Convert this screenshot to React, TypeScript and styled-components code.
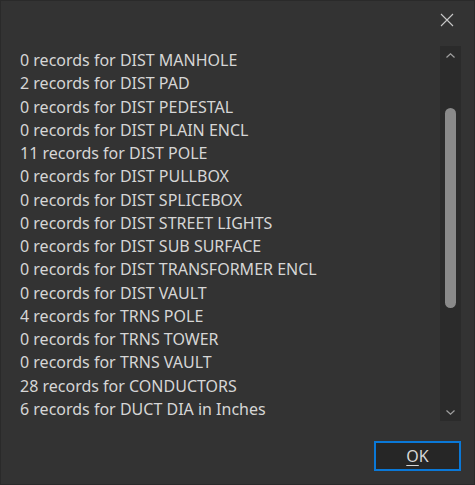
import React from 'react';
import styled, { createGlobalStyle } from 'styled-components';

const GlobalStyle = createGlobalStyle`
  html, body {
    margin: 0;
    padding: 0;
    background: #333333;
  }
`;

const Dialog = styled.div`
  box-sizing: border-box;
  width: 475px;
  height: 485px;
  background: #333333;
  border: 1px solid #2a2a2a;
  display: flex;
  flex-direction: column;
  font-family: 'Noto Sans', 'Open Sans', sans-serif;
  color: #d6d6d6;
`;

const TitleBar = styled.div`
  height: 45px;
  display: flex;
  justify-content: flex-end;
  align-items: flex-start;
  padding-right: 17px;
`;

const CloseButton = styled.div`
  width: 20px;
  height: 20px;
  margin-top: 9px;
  display: flex;
  align-items: center;
  justify-content: center;
`;

const Body = styled.div`
  display: flex;
  height: 375px;
  padding-left: 19px;
  padding-right: 13px;
`;

const List = styled.div`
  flex: 1;
  padding-top: 3px;
  overflow: hidden;
`;

const Row = styled.div`
  font-size: 16px;
  line-height: 23.25px;
  white-space: nowrap;
`;

const ScrollTrack = styled.div`
  width: 21px;
  background: #2b2b2b;
  display: flex;
  flex-direction: column;
  align-items: center;
`;

const Arrow = styled.div`
  height: 18px;
  width: 100%;
  display: flex;
  align-items: center;
  justify-content: center;
`;

const ThumbArea = styled.div`
  flex: 1;
  width: 100%;
  display: flex;
  justify-content: center;
  padding-top: 44px;
`;

const Thumb = styled.div`
  width: 11px;
  height: 200px;
  background: #8a8a8a;
  border-radius: 6px;
`;

const Footer = styled.div`
  flex: 1;
  display: flex;
  justify-content: flex-end;
  align-items: flex-start;
  padding-top: 20px;
  padding-right: 13px;
`;

const OkButton = styled.button`
  box-sizing: border-box;
  width: 87px;
  height: 30px;
  background: #262626;
  border: 2px solid #0a78d7;
  color: #d6d6d6;
  font-family: 'Noto Sans', 'Open Sans', sans-serif;
  font-size: 16px;
  padding: 0;
  u {
    text-decoration-thickness: 1px;
    text-underline-offset: 3px;
  }
`;

const records: [number, string][] = [
  [0, 'DIST MANHOLE'],
  [2, 'DIST PAD'],
  [0, 'DIST PEDESTAL'],
  [0, 'DIST PLAIN ENCL'],
  [11, 'DIST POLE'],
  [0, 'DIST PULLBOX'],
  [0, 'DIST SPLICEBOX'],
  [0, 'DIST STREET LIGHTS'],
  [0, 'DIST SUB SURFACE'],
  [0, 'DIST TRANSFORMER ENCL'],
  [0, 'DIST VAULT'],
  [4, 'TRNS POLE'],
  [0, 'TRNS TOWER'],
  [0, 'TRNS VAULT'],
  [28, 'CONDUCTORS'],
  [6, 'DUCT DIA in Inches'],
];

export default function App() {
  return (
    <>
      <GlobalStyle />
      <Dialog>
        <TitleBar>
          <CloseButton>
            <svg width="14" height="14" viewBox="0 0 14 14">
              <path d="M1 1 L13 13 M13 1 L1 13" stroke="#c8c8c8" strokeWidth="1.1" />
            </svg>
          </CloseButton>
        </TitleBar>
        <Body>
          <List>
            {records.map(([n, name]) => (
              <Row key={name}>
                {n} records for {name}
              </Row>
            ))}
          </List>
          <ScrollTrack>
            <Arrow>
              <svg width="9" height="5" viewBox="0 0 9 5">
                <path d="M0.5 4.5 L4.5 0.8 L8.5 4.5" stroke="#a0a0a0" strokeWidth="1.2" fill="none" />
              </svg>
            </Arrow>
            <ThumbArea>
              <Thumb />
            </ThumbArea>
            <Arrow>
              <svg width="9" height="5" viewBox="0 0 9 5">
                <path d="M0.5 0.5 L4.5 4.2 L8.5 0.5" stroke="#a0a0a0" strokeWidth="1.2" fill="none" />
              </svg>
            </Arrow>
          </ScrollTrack>
        </Body>
        <Footer>
          <OkButton>
            <u>O</u>K
          </OkButton>
        </Footer>
      </Dialog>
    </>
  );
}
